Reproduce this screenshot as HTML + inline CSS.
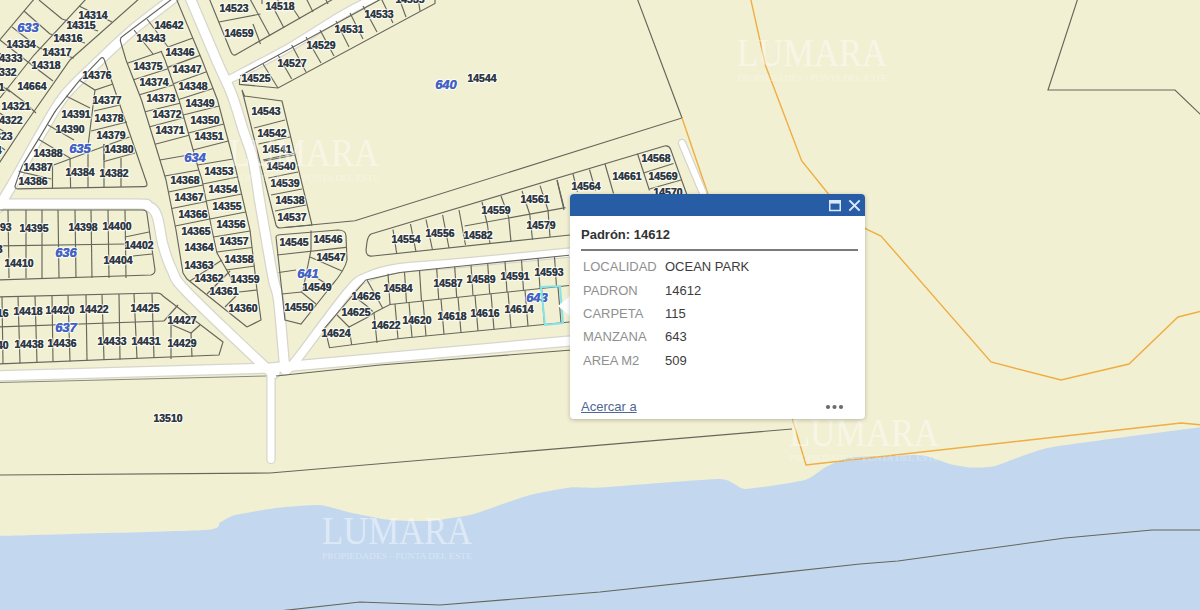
<!DOCTYPE html>
<html><head><meta charset="utf-8">
<style>
html,body{margin:0;padding:0;width:1200px;height:610px;overflow:hidden;background:#f2f0d3;}
svg{position:absolute;left:0;top:0;}
.l{font-family:"Liberation Sans",sans-serif;font-weight:bold;font-size:10.4px;fill:#2e3944;text-anchor:middle;stroke:#ffffff;stroke-width:2.6px;stroke-opacity:0.7;paint-order:stroke;stroke-linejoin:round;}
.lf{font-family:"Liberation Sans",sans-serif;font-weight:bold;font-size:10.4px;fill:#2e3944;text-anchor:middle;stroke:#2e3944;stroke-width:0.12px;}
.b{font-family:"Liberation Sans",sans-serif;font-weight:bold;font-style:italic;font-size:13px;fill:#4262c6;text-anchor:middle;stroke:#ffffff;stroke-width:2.6px;stroke-opacity:0.7;paint-order:stroke;stroke-linejoin:round;}
.bf{font-family:"Liberation Sans",sans-serif;font-weight:bold;font-style:italic;font-size:13px;fill:#4262c6;text-anchor:middle;stroke:#4262c6;stroke-width:0.15px;}
.wm{font-family:"Liberation Serif",serif;font-size:40px;fill:#ffffff;fill-opacity:0.45;}
.wms{font-family:"Liberation Serif",serif;font-size:7.5px;fill:#ffffff;fill-opacity:0.35;}
#pop{position:absolute;left:570px;top:194px;width:295px;height:225px;background:#fff;border-radius:4px;box-shadow:0 1px 4px rgba(0,0,0,0.25);font-family:"Liberation Sans",sans-serif;}
#hdr{position:absolute;left:0;top:0;width:295px;height:22px;background:#275da4;border-radius:4px 4px 0 0;}
#ptr{position:absolute;left:558px;top:296px;width:0;height:0;border-top:10px solid transparent;border-bottom:10px solid transparent;border-right:12px solid #fff;}
#ttl{position:absolute;left:11px;top:33px;font-size:13px;font-weight:bold;color:#323232;white-space:nowrap;}
#sep{position:absolute;left:11px;top:55px;width:277px;height:2px;background:#7a7a7a;}
.row{position:absolute;left:13px;font-size:13px;white-space:nowrap;}
.row .k{position:absolute;left:0;color:#8f8f8f;}
.row .v{position:absolute;left:82px;color:#3c3c3c;}
#lnk{position:absolute;left:11px;top:205px;font-size:13px;color:#4d6894;text-decoration:underline;white-space:nowrap;}

</style></head><body>
<svg width="1200" height="610" viewBox="0 0 1200 610">
<rect width="1200" height="610" fill="#f2f0d3"/>
<path d="M-2.0,536.0 C15.2,535.5 186.5,531.1 205.0,530.0 C223.5,528.9 217.5,523.8 220.0,522.5 C222.5,521.2 230.0,516.2 235.0,515.0 C240.0,513.8 272.9,508.3 280.0,507.5 C287.1,506.7 314.2,504.6 320.0,505.0 C325.8,505.4 344.2,511.2 350.0,512.5 C355.8,513.8 383.3,519.3 390.0,520.0 C396.7,520.7 423.3,521.4 430.0,521.0 C436.7,520.6 464.2,516.3 470.0,515.0 C475.8,513.7 495.0,506.7 500.0,505.0 C505.0,503.3 524.2,496.5 530.0,495.0 C535.8,493.5 564.2,488.1 570.0,487.5 C575.8,486.9 587.5,488.2 600.0,487.5 C612.5,486.8 707.9,478.9 720.0,479.0 C732.1,479.1 737.9,488.9 745.0,489.0 C752.1,489.1 798.3,481.8 805.0,480.0 C811.7,478.2 821.2,469.4 825.0,467.5 C828.8,465.6 842.1,458.5 850.0,457.5 C857.9,456.5 911.7,454.5 920.0,455.0 C928.3,455.5 945.8,463.0 950.0,464.0 C954.2,465.0 966.2,467.3 970.0,467.5 C973.8,467.7 988.3,467.7 995.0,466.0 C1001.7,464.3 1032.8,450.8 1050.0,447.5 C1067.2,444.2 1189.3,428.7 1202.0,427.0 L1202,612 L-2,612 Z" fill="#c3d8ef"/>
<polyline points="270.0,612.0 360.0,602.0 440.0,605.0 600.0,592.0 860.0,564.0 898.0,561.0 1065.0,538.0 1152.0,530.0 1202.0,530.0" fill="none" stroke="#66665c" stroke-width="1.15" />
<polyline points="-2.0,475.0 270.0,473.0 792.0,429.0" fill="none" stroke="#66665c" stroke-width="1.15" />
<polyline points="1078.0,-2.0 1048.0,90.0 1175.0,90.0 1202.0,116.0" fill="none" stroke="#66665c" stroke-width="1.15" />
<polyline points="637.0,-2.0 682.0,118.0 355.0,220.7 284.0,227.5" fill="none" stroke="#66665c" stroke-width="1.15" />
<polyline points="750.5,-2.0 765.5,65.5 801.6,160.7 828.0,193.4 866.0,229.0 881.0,236.0 991.0,362.0 1061.0,380.0 1129.0,364.0 1178.0,317.0 1202.0,311.0" fill="none" stroke="#efad42" stroke-width="1.4" />
<polyline points="682.0,118.0 710.0,200.0" fill="none" stroke="#efad42" stroke-width="1.4" />
<polyline points="792.0,418.0 806.0,465.0 1181.0,423.0 1202.0,425.0" fill="none" stroke="#efad42" stroke-width="1.4" />
<path d="M178.0,-6.0 C176.8,-5.0 178.6,-6.0 171.0,0.0 C163.4,6.0 144.3,20.0 132.5,30.0 C120.7,40.0 111.2,49.2 100.0,60.0 C88.8,70.8 74.5,83.3 65.0,95.0 C55.5,106.7 49.5,119.2 43.0,130.0 C36.5,140.8 31.2,150.8 26.0,160.0 C20.8,169.2 16.7,177.0 12.0,185.0 C7.3,193.0 0.3,204.2 -2.0,208.0" fill="none" stroke="#d6d6cc" stroke-width="11.5" stroke-linecap="round" stroke-linejoin="round"/>
<path d="M189.0,-6.0 C189.3,-5.0 186.4,-11.0 191.0,0.0 C195.6,11.0 209.7,44.2 216.5,60.0 C223.3,75.8 227.6,83.3 232.0,95.0 C236.4,106.7 239.7,119.2 243.2,130.0 C246.7,140.8 250.3,148.3 253.0,160.0 C255.7,171.7 257.4,187.5 259.5,200.0 C261.6,212.5 263.2,221.7 265.5,235.0 C267.8,248.3 271.3,269.2 273.5,280.0 C275.7,290.8 276.8,286.7 278.5,300.0 C280.2,313.3 282.9,348.3 284.0,360.0 C285.1,371.7 284.8,368.3 285.0,370.0" fill="none" stroke="#d6d6cc" stroke-width="11.5" stroke-linecap="round" stroke-linejoin="round"/>
<path d="M230.0,79.0 C240.0,73.7 271.7,57.5 290.0,47.0 C308.3,36.5 326.3,24.0 340.0,16.0 C353.7,8.0 365.3,2.5 372.0,-1.0 C378.7,-4.5 378.7,-4.3 380.0,-5.0" fill="none" stroke="#d6d6cc" stroke-width="9.5" stroke-linecap="round" stroke-linejoin="round"/>
<path d="M-6.0,204.0 C16.7,204.0 104.3,203.7 130.0,204.0 C155.7,204.3 143.5,204.0 148.0,206.0 C152.5,208.0 154.5,209.5 157.0,216.0 C159.5,222.5 160.5,236.0 163.0,245.0 C165.5,254.0 168.0,262.2 172.0,270.0 C176.0,277.8 171.8,276.2 187.0,292.0 C202.2,307.8 248.3,351.5 263.0,365.0 C277.7,378.5 273.0,371.7 275.0,373.0" fill="none" stroke="#d6d6cc" stroke-width="11.5" stroke-linecap="round" stroke-linejoin="round"/>
<path d="M-6.0,376.0 L270.0,368.0 L570.0,341.0" fill="none" stroke="#d6d6cc" stroke-width="11.5" stroke-linecap="round" stroke-linejoin="round"/>
<path d="M287.0,370.0 C288.8,368.0 287.8,371.0 298.0,358.0 C308.2,345.0 336.5,305.5 348.0,292.0 C359.5,278.5 358.3,281.0 367.0,277.0 C375.7,273.0 384.5,270.3 400.0,268.0 C415.5,265.7 430.8,265.7 460.0,263.0 C489.2,260.3 555.8,253.8 575.0,252.0" fill="none" stroke="#d6d6cc" stroke-width="10.5" stroke-linecap="round" stroke-linejoin="round"/>
<path d="M271.0,368.0 L271.0,459.5" fill="none" stroke="#d6d6cc" stroke-width="9.5" stroke-linecap="round" stroke-linejoin="round"/>
<path d="M682.0,143.0 L703.0,193.0" fill="none" stroke="#d6d6cc" stroke-width="8.5" stroke-linecap="round" stroke-linejoin="round"/>
<path d="M178.0,-6.0 C176.8,-5.0 178.6,-6.0 171.0,0.0 C163.4,6.0 144.3,20.0 132.5,30.0 C120.7,40.0 111.2,49.2 100.0,60.0 C88.8,70.8 74.5,83.3 65.0,95.0 C55.5,106.7 49.5,119.2 43.0,130.0 C36.5,140.8 31.2,150.8 26.0,160.0 C20.8,169.2 16.7,177.0 12.0,185.0 C7.3,193.0 0.3,204.2 -2.0,208.0" fill="none" stroke="#ffffff" stroke-width="9" stroke-linecap="round" stroke-linejoin="round"/>
<path d="M189.0,-6.0 C189.3,-5.0 186.4,-11.0 191.0,0.0 C195.6,11.0 209.7,44.2 216.5,60.0 C223.3,75.8 227.6,83.3 232.0,95.0 C236.4,106.7 239.7,119.2 243.2,130.0 C246.7,140.8 250.3,148.3 253.0,160.0 C255.7,171.7 257.4,187.5 259.5,200.0 C261.6,212.5 263.2,221.7 265.5,235.0 C267.8,248.3 271.3,269.2 273.5,280.0 C275.7,290.8 276.8,286.7 278.5,300.0 C280.2,313.3 282.9,348.3 284.0,360.0 C285.1,371.7 284.8,368.3 285.0,370.0" fill="none" stroke="#ffffff" stroke-width="9" stroke-linecap="round" stroke-linejoin="round"/>
<path d="M230.0,79.0 C240.0,73.7 271.7,57.5 290.0,47.0 C308.3,36.5 326.3,24.0 340.0,16.0 C353.7,8.0 365.3,2.5 372.0,-1.0 C378.7,-4.5 378.7,-4.3 380.0,-5.0" fill="none" stroke="#ffffff" stroke-width="7" stroke-linecap="round" stroke-linejoin="round"/>
<path d="M-6.0,204.0 C16.7,204.0 104.3,203.7 130.0,204.0 C155.7,204.3 143.5,204.0 148.0,206.0 C152.5,208.0 154.5,209.5 157.0,216.0 C159.5,222.5 160.5,236.0 163.0,245.0 C165.5,254.0 168.0,262.2 172.0,270.0 C176.0,277.8 171.8,276.2 187.0,292.0 C202.2,307.8 248.3,351.5 263.0,365.0 C277.7,378.5 273.0,371.7 275.0,373.0" fill="none" stroke="#ffffff" stroke-width="9" stroke-linecap="round" stroke-linejoin="round"/>
<path d="M-6.0,376.0 L270.0,368.0 L570.0,341.0" fill="none" stroke="#ffffff" stroke-width="9" stroke-linecap="round" stroke-linejoin="round"/>
<path d="M287.0,370.0 C288.8,368.0 287.8,371.0 298.0,358.0 C308.2,345.0 336.5,305.5 348.0,292.0 C359.5,278.5 358.3,281.0 367.0,277.0 C375.7,273.0 384.5,270.3 400.0,268.0 C415.5,265.7 430.8,265.7 460.0,263.0 C489.2,260.3 555.8,253.8 575.0,252.0" fill="none" stroke="#ffffff" stroke-width="8" stroke-linecap="round" stroke-linejoin="round"/>
<path d="M271.0,368.0 L271.0,459.5" fill="none" stroke="#ffffff" stroke-width="7" stroke-linecap="round" stroke-linejoin="round"/>
<path d="M682.0,143.0 L703.0,193.0" fill="none" stroke="#ffffff" stroke-width="6" stroke-linecap="round" stroke-linejoin="round"/>
<polyline points="276.0,376.0 380.0,365.0 572.0,350.0" fill="none" stroke="#66665c" stroke-width="1.15" />
<polyline points="-2.0,382.5 266.0,376.0" fill="none" stroke="#8a8a80" stroke-width="1.15" />
<polyline points="140.0,-2.0 70.0,60.0 21.0,130.0 -4.0,168.0" fill="none" stroke="#66665c" stroke-width="1.15" />
<polyline points="87.0,-2.0 34.0,55.0 0.0,98.0" fill="none" stroke="#66665c" stroke-width="1.15" />
<polyline points="35.0,-2.0 -2.0,42.0" fill="none" stroke="#66665c" stroke-width="1.15" />
<polyline points="79.0,6.0 112.0,22.0" fill="none" stroke="#66665c" stroke-width="1.15" />
<polyline points="62.0,19.0 98.0,31.0" fill="none" stroke="#66665c" stroke-width="1.15" />
<polyline points="50.0,34.0 85.0,43.0" fill="none" stroke="#66665c" stroke-width="1.15" />
<polyline points="39.0,48.0 74.0,58.0" fill="none" stroke="#66665c" stroke-width="1.15" />
<polyline points="28.0,62.0 53.0,81.0" fill="none" stroke="#66665c" stroke-width="1.15" />
<polyline points="6.0,88.0 23.0,101.0" fill="none" stroke="#66665c" stroke-width="1.15" />
<polyline points="23.0,101.0 36.0,113.0" fill="none" stroke="#66665c" stroke-width="1.15" />
<polyline points="39.0,0.0 62.0,19.0" fill="none" stroke="#66665c" stroke-width="1.15" />
<polyline points="24.0,11.0 50.0,34.0" fill="none" stroke="#66665c" stroke-width="1.15" />
<polyline points="12.0,27.0 39.0,48.0" fill="none" stroke="#66665c" stroke-width="1.15" />
<polyline points="0.0,40.0 28.0,62.0" fill="none" stroke="#66665c" stroke-width="1.15" />
<polyline points="-2.0,52.0 8.0,60.0" fill="none" stroke="#66665c" stroke-width="1.15" />
<polyline points="-2.0,66.0 6.0,72.0" fill="none" stroke="#66665c" stroke-width="1.15" />
<polyline points="-2.0,83.0 10.0,92.0" fill="none" stroke="#66665c" stroke-width="1.15" />
<polyline points="-2.0,112.0 12.0,121.0" fill="none" stroke="#66665c" stroke-width="1.15" />
<polyline points="-2.0,128.0 8.0,134.0" fill="none" stroke="#66665c" stroke-width="1.15" />
<polyline points="-2.0,145.0 5.0,150.0" fill="none" stroke="#66665c" stroke-width="1.15" />
<path d="M100.2,58.9 Q103.0,56.0 104.3,59.8 L146.7,182.7 Q148.0,186.5 144.0,186.6 L18.0,188.9 Q14.0,189.0 15.3,185.2 L20.7,169.8 Q22.0,166.0 24.1,162.6 L35.9,143.4 Q38.0,140.0 40.1,136.6 L53.9,113.4 Q56.0,110.0 58.5,106.9 L76.5,84.1 Q79.0,81.0 81.8,78.1 Z" fill="none" stroke="#66665c" stroke-width="1.15"/>
<polyline points="79.0,80.0 95.0,90.0 113.0,84.0" fill="none" stroke="#66665c" stroke-width="1.15" />
<polyline points="95.0,90.0 88.0,146.0 88.0,187.5" fill="none" stroke="#66665c" stroke-width="1.15" />
<polyline points="94.0,111.0 120.0,105.0" fill="none" stroke="#66665c" stroke-width="1.15" />
<polyline points="91.0,131.0 127.0,122.0" fill="none" stroke="#66665c" stroke-width="1.15" />
<polyline points="104.0,161.5 135.0,153.0" fill="none" stroke="#66665c" stroke-width="1.15" />
<polyline points="66.0,96.0 90.0,108.0" fill="none" stroke="#66665c" stroke-width="1.15" />
<polyline points="48.0,125.0 74.0,140.0" fill="none" stroke="#66665c" stroke-width="1.15" />
<polyline points="38.0,139.0 70.0,158.0 70.6,188.0" fill="none" stroke="#66665c" stroke-width="1.15" />
<polyline points="53.7,165.0 129.5,137.0" fill="none" stroke="#66665c" stroke-width="1.15" />
<polyline points="52.5,165.0 52.5,188.5" fill="none" stroke="#66665c" stroke-width="1.15" />
<polyline points="104.0,144.0 104.0,187.0" fill="none" stroke="#66665c" stroke-width="1.15" />
<polyline points="121.0,158.0 121.0,187.0" fill="none" stroke="#66665c" stroke-width="1.15" />
<polyline points="18.7,171.4 51.3,179.0" fill="none" stroke="#66665c" stroke-width="1.15" />
<polyline points="104.0,160.0 104.0,144.0" fill="none" stroke="#66665c" stroke-width="1.15" />
<polyline points="126.0,60.0 141.5,100.0 163.0,170.0 166.0,180.0 176.0,230.0 183.0,273.0 187.0,279.0 247.0,327.0" fill="none" stroke="#66665c" stroke-width="1.15" />
<polyline points="165.0,60.0 179.0,100.0 198.8,170.0 202.0,180.0 212.0,230.0 217.0,253.0 230.0,276.0 233.0,282.0" fill="none" stroke="#66665c" stroke-width="1.15" />
<polyline points="176.0,-2.0 202.0,60.0 217.5,100.0 236.0,170.0 250.0,230.0 257.0,290.0 261.0,320.0 247.0,327.0" fill="none" stroke="#66665c" stroke-width="1.15" />
<path d="M126,60 L121,43 Q119,38 123,36 L172,-1" fill="none" stroke="#66665c" stroke-width="1.15"/>
<polyline points="147.0,19.0 168.0,47.0" fill="none" stroke="#66665c" stroke-width="1.15" />
<polyline points="134.0,30.0 153.0,54.0" fill="none" stroke="#66665c" stroke-width="1.15" />
<polyline points="168.0,47.0 193.0,38.0" fill="none" stroke="#66665c" stroke-width="1.15" />
<polyline points="161.0,51.0 165.0,60.0" fill="none" stroke="#66665c" stroke-width="1.15" />
<polyline points="127.3,63.3 162.0,51.3" fill="none" stroke="#66665c" stroke-width="1.15" />
<polyline points="133.6,79.7 168.0,68.7" fill="none" stroke="#66665c" stroke-width="1.15" />
<polyline points="139.5,94.8 173.7,84.8" fill="none" stroke="#66665c" stroke-width="1.15" />
<polyline points="145.1,111.7 179.9,103.2" fill="none" stroke="#66665c" stroke-width="1.15" />
<polyline points="149.7,126.8 184.0,117.8" fill="none" stroke="#66665c" stroke-width="1.15" />
<polyline points="155.1,144.3 189.0,135.3" fill="none" stroke="#66665c" stroke-width="1.15" />
<polyline points="159.9,160.0 194.3,154.0" fill="none" stroke="#66665c" stroke-width="1.15" />
<polyline points="164.8,176.0 198.8,170.0" fill="none" stroke="#66665c" stroke-width="1.15" />
<polyline points="168.4,192.0 203.0,185.0" fill="none" stroke="#66665c" stroke-width="1.15" />
<polyline points="171.7,208.5 206.3,201.5" fill="none" stroke="#66665c" stroke-width="1.15" />
<polyline points="175.2,226.0 209.8,219.0" fill="none" stroke="#66665c" stroke-width="1.15" />
<polyline points="167.6,67.4 200.1,55.4" fill="none" stroke="#66665c" stroke-width="1.15" />
<polyline points="173.3,83.8 206.6,71.8" fill="none" stroke="#66665c" stroke-width="1.15" />
<polyline points="178.8,99.5 213.0,88.5" fill="none" stroke="#66665c" stroke-width="1.15" />
<polyline points="183.2,115.0 219.1,106.0" fill="none" stroke="#66665c" stroke-width="1.15" />
<polyline points="188.3,133.0 223.8,124.0" fill="none" stroke="#66665c" stroke-width="1.15" />
<polyline points="193.1,150.0 228.3,141.0" fill="none" stroke="#66665c" stroke-width="1.15" />
<polyline points="197.4,165.0 233.1,159.0" fill="none" stroke="#66665c" stroke-width="1.15" />
<polyline points="202.8,184.0 237.6,177.0" fill="none" stroke="#66665c" stroke-width="1.15" />
<polyline points="206.2,201.0 241.6,194.0" fill="none" stroke="#66665c" stroke-width="1.15" />
<polyline points="209.8,219.0 245.8,212.0" fill="none" stroke="#66665c" stroke-width="1.15" />
<polyline points="213.5,237.0 250.1,231.0" fill="none" stroke="#66665c" stroke-width="1.15" />
<polyline points="216.8,252.0 252.0,247.5" fill="none" stroke="#66665c" stroke-width="1.15" />
<polyline points="190.0,281.0 222.0,260.0" fill="none" stroke="#66665c" stroke-width="1.15" />
<polyline points="207.0,294.0 230.0,271.0" fill="none" stroke="#66665c" stroke-width="1.15" />
<polyline points="226.0,270.0 255.0,266.0" fill="none" stroke="#66665c" stroke-width="1.15" />
<polyline points="239.0,292.0 257.0,290.0" fill="none" stroke="#66665c" stroke-width="1.15" />
<polyline points="236.0,296.0 225.0,307.0" fill="none" stroke="#66665c" stroke-width="1.15" />
<path d="M-4,210 L142,210 Q147,210 147,214 L155,270 Q155,274 151,275 L-4,280" fill="none" stroke="#66665c" stroke-width="1.15"/>
<polyline points="-4.0,246.0 125.0,244.0" fill="none" stroke="#66665c" stroke-width="1.15" />
<polyline points="8.0,210.0 9.0,278.0" fill="none" stroke="#66665c" stroke-width="1.15" />
<polyline points="26.0,210.0 26.0,278.0" fill="none" stroke="#66665c" stroke-width="1.15" />
<polyline points="42.0,210.0 42.0,278.0" fill="none" stroke="#66665c" stroke-width="1.15" />
<polyline points="58.0,210.0 59.0,278.0" fill="none" stroke="#66665c" stroke-width="1.15" />
<polyline points="75.0,210.0 76.0,278.0" fill="none" stroke="#66665c" stroke-width="1.15" />
<polyline points="91.0,210.0 92.0,278.0" fill="none" stroke="#66665c" stroke-width="1.15" />
<polyline points="108.0,210.0 109.0,278.0" fill="none" stroke="#66665c" stroke-width="1.15" />
<polyline points="125.0,210.0 126.0,278.0" fill="none" stroke="#66665c" stroke-width="1.15" />
<polyline points="125.0,237.0 149.0,232.0" fill="none" stroke="#66665c" stroke-width="1.15" />
<polyline points="133.0,256.0 152.0,254.0" fill="none" stroke="#66665c" stroke-width="1.15" />
<polyline points="-4.0,249.0 3.0,252.0" fill="none" stroke="#66665c" stroke-width="1.15" />
<path d="M-4,297 L157,293 Q161,293 163,296 L223,342 L219,355 L-4,364" fill="none" stroke="#66665c" stroke-width="1.15"/>
<polyline points="-4.0,327.0 164.0,321.0" fill="none" stroke="#66665c" stroke-width="1.15" />
<polyline points="2.0,296.9 3.0,364.1" fill="none" stroke="#66665c" stroke-width="1.15" />
<polyline points="18.0,296.6 20.0,363.4" fill="none" stroke="#66665c" stroke-width="1.15" />
<polyline points="35.0,296.1 37.0,362.7" fill="none" stroke="#66665c" stroke-width="1.15" />
<polyline points="52.0,295.7 53.0,362.1" fill="none" stroke="#66665c" stroke-width="1.15" />
<polyline points="68.0,295.3 70.0,361.4" fill="none" stroke="#66665c" stroke-width="1.15" />
<polyline points="86.0,294.9 87.0,360.7" fill="none" stroke="#66665c" stroke-width="1.15" />
<polyline points="102.0,294.4 104.0,360.0" fill="none" stroke="#66665c" stroke-width="1.15" />
<polyline points="119.0,294.0 120.0,359.4" fill="none" stroke="#66665c" stroke-width="1.15" />
<polyline points="134.0,293.6 137.0,358.7" fill="none" stroke="#66665c" stroke-width="1.15" />
<polyline points="152.0,293.2 154.0,358.0" fill="none" stroke="#66665c" stroke-width="1.15" />
<polyline points="164.0,321.0 178.0,305.0" fill="none" stroke="#66665c" stroke-width="1.15" />
<polyline points="170.0,324.0 191.0,333.0 200.0,325.0" fill="none" stroke="#66665c" stroke-width="1.15" />
<polyline points="191.0,333.0 192.0,357.0" fill="none" stroke="#66665c" stroke-width="1.15" />
<polyline points="171.0,323.0 171.0,359.0" fill="none" stroke="#66665c" stroke-width="1.15" />
<path d="M242,90 L244.5,96 L282,101 L312,225 L280,228 Q277,228 276,225 Z" fill="none" stroke="#66665c" stroke-width="1.15"/>
<polyline points="254.0,128.0 285.0,120.0" fill="none" stroke="#66665c" stroke-width="1.15" />
<polyline points="258.5,144.0 290.0,137.0" fill="none" stroke="#66665c" stroke-width="1.15" />
<polyline points="263.0,160.0 295.0,153.0" fill="none" stroke="#66665c" stroke-width="1.15" />
<polyline points="264.0,161.0 295.0,155.0" fill="none" stroke="#66665c" stroke-width="1.15" />
<polyline points="268.0,178.0 298.0,172.0" fill="none" stroke="#66665c" stroke-width="1.15" />
<polyline points="271.0,195.0 302.0,189.0" fill="none" stroke="#66665c" stroke-width="1.15" />
<polyline points="275.0,211.0 306.0,205.0" fill="none" stroke="#66665c" stroke-width="1.15" />
<path d="M276,237 Q276,235 280,234.7 L338,230 Q346,230 346,236 L347,260 Q345,270 332,285 L301,324 L285,320 Z" fill="none" stroke="#66665c" stroke-width="1.15"/>
<polyline points="311.0,230.5 311.0,250.0 309.0,260.0 303.0,290.0 301.5,292.0" fill="none" stroke="#66665c" stroke-width="1.15" />
<polyline points="277.0,255.0 346.0,247.4" fill="none" stroke="#66665c" stroke-width="1.15" />
<polyline points="278.7,272.5 296.0,270.0" fill="none" stroke="#66665c" stroke-width="1.15" />
<polyline points="310.0,257.0 342.0,271.0" fill="none" stroke="#66665c" stroke-width="1.15" />
<polyline points="317.0,278.0 325.0,283.0" fill="none" stroke="#66665c" stroke-width="1.15" />
<polyline points="281.7,294.0 301.5,292.0 316.0,304.0" fill="none" stroke="#66665c" stroke-width="1.15" />
<path d="M209,-2 L231,52 Q233,57 237,54 L335,-2" fill="none" stroke="#66665c" stroke-width="1.15"/>
<polyline points="219.0,22.0 260.5,14.0" fill="none" stroke="#66665c" stroke-width="1.15" />
<polyline points="253.0,24.0 260.5,44.0" fill="none" stroke="#66665c" stroke-width="1.15" />
<polyline points="249.5,-2.0 270.0,36.0" fill="none" stroke="#66665c" stroke-width="1.15" />
<polyline points="273.0,7.0 284.0,28.0" fill="none" stroke="#66665c" stroke-width="1.15" />
<polyline points="292.0,7.0 300.0,19.0" fill="none" stroke="#66665c" stroke-width="1.15" />
<polyline points="306.0,-2.0 313.0,12.0" fill="none" stroke="#66665c" stroke-width="1.15" />
<polyline points="325.0,-2.0 328.0,4.0" fill="none" stroke="#66665c" stroke-width="1.15" />
<polyline points="262.0,-2.0 262.0,4.0" fill="none" stroke="#66665c" stroke-width="1.15" />
<polyline points="277.0,-2.0 280.0,6.0" fill="none" stroke="#66665c" stroke-width="1.15" />
<path d="M240,76 L383,-2 M239.5,79 L239.5,84.4 L278,88 L435,3.5 L435,-2" fill="none" stroke="#66665c" stroke-width="1.15"/>
<polyline points="418.0,-2.0 420.0,11.0" fill="none" stroke="#66665c" stroke-width="1.15" />
<polyline points="263.0,64.0 278.0,88.0" fill="none" stroke="#66665c" stroke-width="1.15" />
<polyline points="278.0,55.0 291.7,79.0" fill="none" stroke="#66665c" stroke-width="1.15" />
<polyline points="291.7,45.0 306.0,72.0" fill="none" stroke="#66665c" stroke-width="1.15" />
<polyline points="306.0,37.0 321.0,63.0" fill="none" stroke="#66665c" stroke-width="1.15" />
<polyline points="320.0,30.0 334.0,56.0" fill="none" stroke="#66665c" stroke-width="1.15" />
<polyline points="336.0,21.0 349.0,47.0" fill="none" stroke="#66665c" stroke-width="1.15" />
<polyline points="350.0,13.0 363.0,39.0" fill="none" stroke="#66665c" stroke-width="1.15" />
<polyline points="363.0,6.0 377.0,32.0" fill="none" stroke="#66665c" stroke-width="1.15" />
<polyline points="381.0,-2.0 393.0,23.0" fill="none" stroke="#66665c" stroke-width="1.15" />
<polyline points="399.0,-2.0 406.0,17.0" fill="none" stroke="#66665c" stroke-width="1.15" />
<path d="M371,234 L664.5,146 Q669,145 670.5,149 L687,195 M570,235 L373,256 Q366,257 366,250 L367,242 Q368,236 371,234" fill="none" stroke="#66665c" stroke-width="1.15"/>
<polyline points="464.6,226.0 565.5,207.6" fill="none" stroke="#66665c" stroke-width="1.15" />
<polyline points="393.0,229.6 396.7,253.5" fill="none" stroke="#66665c" stroke-width="1.15" />
<polyline points="410.5,224.0 416.0,251.6" fill="none" stroke="#66665c" stroke-width="1.15" />
<polyline points="426.0,219.5 432.5,249.8" fill="none" stroke="#66665c" stroke-width="1.15" />
<polyline points="442.6,215.0 449.0,248.0" fill="none" stroke="#66665c" stroke-width="1.15" />
<polyline points="459.0,210.0 465.5,245.0" fill="none" stroke="#66665c" stroke-width="1.15" />
<polyline points="482.0,202.0 487.5,225.0" fill="none" stroke="#66665c" stroke-width="1.15" />
<polyline points="501.0,196.0 508.6,216.8" fill="none" stroke="#66665c" stroke-width="1.15" />
<polyline points="522.0,191.0 529.7,214.0" fill="none" stroke="#66665c" stroke-width="1.15" />
<polyline points="540.0,185.6 548.0,210.0" fill="none" stroke="#66665c" stroke-width="1.15" />
<polyline points="557.0,180.0 564.0,207.6" fill="none" stroke="#66665c" stroke-width="1.15" />
<polyline points="487.5,225.0 490.0,244.0" fill="none" stroke="#66665c" stroke-width="1.15" />
<polyline points="508.6,216.8 511.0,241.6" fill="none" stroke="#66665c" stroke-width="1.15" />
<polyline points="529.7,214.0 532.5,239.7" fill="none" stroke="#66665c" stroke-width="1.15" />
<polyline points="548.0,210.0 550.0,237.0" fill="none" stroke="#66665c" stroke-width="1.15" />
<polyline points="557.0,180.0 564.0,210.0" fill="none" stroke="#66665c" stroke-width="1.15" />
<polyline points="573.0,174.0 577.5,192.0" fill="none" stroke="#66665c" stroke-width="1.15" />
<polyline points="589.5,169.5 595.5,190.5" fill="none" stroke="#66665c" stroke-width="1.15" />
<polyline points="605.0,164.0 613.5,193.5" fill="none" stroke="#66665c" stroke-width="1.15" />
<polyline points="637.5,153.7 649.5,190.5" fill="none" stroke="#66665c" stroke-width="1.15" />
<polyline points="643.5,173.0 673.5,163.5" fill="none" stroke="#66665c" stroke-width="1.15" />
<polyline points="649.5,189.0 681.0,180.0" fill="none" stroke="#66665c" stroke-width="1.15" />
<path d="M365.7,280 L400,272.5 L460,266.2 L569,255.2 M365.7,280 L324.8,327.8 L329.5,347.7 L400,338.5 L569.5,322" fill="none" stroke="#66665c" stroke-width="1.15"/>
<polyline points="374.0,312.7 390.0,304.5 569.0,285.5" fill="none" stroke="#66665c" stroke-width="1.15" />
<polyline points="358.7,299.8 366.8,306.0 372.7,311.5" fill="none" stroke="#66665c" stroke-width="1.15" />
<polyline points="337.0,315.0 349.0,327.0 368.0,317.0 374.0,312.7" fill="none" stroke="#66665c" stroke-width="1.15" />
<polyline points="367.0,280.0 382.6,308.0" fill="none" stroke="#66665c" stroke-width="1.15" />
<polyline points="374.0,312.7 377.0,343.0" fill="none" stroke="#66665c" stroke-width="1.15" />
<polyline points="349.0,327.0 351.7,345.0" fill="none" stroke="#66665c" stroke-width="1.15" />
<polyline points="388.0,273.8 390.0,304.5" fill="none" stroke="#66665c" stroke-width="1.15" />
<polyline points="404.5,272.0 406.5,302.7" fill="none" stroke="#66665c" stroke-width="1.15" />
<polyline points="419.5,270.5 421.5,301.2" fill="none" stroke="#66665c" stroke-width="1.15" />
<polyline points="436.7,268.6 438.7,299.3" fill="none" stroke="#66665c" stroke-width="1.15" />
<polyline points="454.7,266.8 456.7,297.4" fill="none" stroke="#66665c" stroke-width="1.15" />
<polyline points="471.0,265.1 473.0,295.7" fill="none" stroke="#66665c" stroke-width="1.15" />
<polyline points="487.7,263.4 489.7,293.9" fill="none" stroke="#66665c" stroke-width="1.15" />
<polyline points="505.0,261.7 507.0,292.1" fill="none" stroke="#66665c" stroke-width="1.15" />
<polyline points="521.5,260.1 523.5,290.3" fill="none" stroke="#66665c" stroke-width="1.15" />
<polyline points="538.0,258.4 540.0,288.6" fill="none" stroke="#66665c" stroke-width="1.15" />
<polyline points="554.5,256.8 556.5,286.8" fill="none" stroke="#66665c" stroke-width="1.15" />
<polyline points="395.0,304.0 398.0,338.7" fill="none" stroke="#66665c" stroke-width="1.15" />
<polyline points="409.0,302.5 412.0,337.3" fill="none" stroke="#66665c" stroke-width="1.15" />
<polyline points="423.0,301.0 426.0,336.0" fill="none" stroke="#66665c" stroke-width="1.15" />
<polyline points="441.0,299.1 444.0,334.2" fill="none" stroke="#66665c" stroke-width="1.15" />
<polyline points="458.0,297.3 461.0,332.6" fill="none" stroke="#66665c" stroke-width="1.15" />
<polyline points="475.0,295.5 478.0,330.9" fill="none" stroke="#66665c" stroke-width="1.15" />
<polyline points="491.0,293.8 494.0,329.4" fill="none" stroke="#66665c" stroke-width="1.15" />
<polyline points="508.0,292.0 511.0,327.7" fill="none" stroke="#66665c" stroke-width="1.15" />
<polyline points="525.0,290.2 528.0,326.1" fill="none" stroke="#66665c" stroke-width="1.15" />
<polyline points="541.5,288.4 544.5,324.5" fill="none" stroke="#66665c" stroke-width="1.15" />
<polyline points="558.0,286.7 561.0,322.9" fill="none" stroke="#66665c" stroke-width="1.15" />
<text x="93" y="18.7" class="l">14314</text>
<text x="93" y="18.7" class="lf">14314</text>
<text x="81" y="28.7" class="l">14315</text>
<text x="81" y="28.7" class="lf">14315</text>
<text x="68" y="41.7" class="l">14316</text>
<text x="68" y="41.7" class="lf">14316</text>
<text x="21" y="47.7" class="l">14334</text>
<text x="21" y="47.7" class="lf">14334</text>
<text x="57" y="55.7" class="l">14317</text>
<text x="57" y="55.7" class="lf">14317</text>
<text x="8" y="61.7" class="l">14333</text>
<text x="8" y="61.7" class="lf">14333</text>
<text x="46" y="68.7" class="l">14318</text>
<text x="46" y="68.7" class="lf">14318</text>
<text x="2" y="75.7" class="l">14332</text>
<text x="2" y="75.7" class="lf">14332</text>
<text x="32" y="89.7" class="l">14664</text>
<text x="32" y="89.7" class="lf">14664</text>
<text x="-10" y="90.7" class="l">14331</text>
<text x="-10" y="90.7" class="lf">14331</text>
<text x="16" y="109.7" class="l">14321</text>
<text x="16" y="109.7" class="lf">14321</text>
<text x="8" y="123.7" class="l">14322</text>
<text x="8" y="123.7" class="lf">14322</text>
<text x="-2" y="139.7" class="l">14323</text>
<text x="-2" y="139.7" class="lf">14323</text>
<text x="-13" y="153.7" class="l">14324</text>
<text x="-13" y="153.7" class="lf">14324</text>
<text x="97" y="78.7" class="l">14376</text>
<text x="97" y="78.7" class="lf">14376</text>
<text x="107" y="103.7" class="l">14377</text>
<text x="107" y="103.7" class="lf">14377</text>
<text x="76" y="117.7" class="l">14391</text>
<text x="76" y="117.7" class="lf">14391</text>
<text x="109" y="121.7" class="l">14378</text>
<text x="109" y="121.7" class="lf">14378</text>
<text x="70" y="132.7" class="l">14390</text>
<text x="70" y="132.7" class="lf">14390</text>
<text x="111" y="138.7" class="l">14379</text>
<text x="111" y="138.7" class="lf">14379</text>
<text x="119" y="152.7" class="l">14380</text>
<text x="119" y="152.7" class="lf">14380</text>
<text x="48" y="156.7" class="l">14388</text>
<text x="48" y="156.7" class="lf">14388</text>
<text x="38" y="170.7" class="l">14387</text>
<text x="38" y="170.7" class="lf">14387</text>
<text x="80" y="175.7" class="l">14384</text>
<text x="80" y="175.7" class="lf">14384</text>
<text x="114" y="176.7" class="l">14382</text>
<text x="114" y="176.7" class="lf">14382</text>
<text x="33" y="184.7" class="l">14386</text>
<text x="33" y="184.7" class="lf">14386</text>
<text x="169" y="28.7" class="l">14642</text>
<text x="169" y="28.7" class="lf">14642</text>
<text x="151" y="41.7" class="l">14343</text>
<text x="151" y="41.7" class="lf">14343</text>
<text x="180" y="55.7" class="l">14346</text>
<text x="180" y="55.7" class="lf">14346</text>
<text x="148" y="69.7" class="l">14375</text>
<text x="148" y="69.7" class="lf">14375</text>
<text x="187" y="72.7" class="l">14347</text>
<text x="187" y="72.7" class="lf">14347</text>
<text x="154" y="85.7" class="l">14374</text>
<text x="154" y="85.7" class="lf">14374</text>
<text x="193" y="89.7" class="l">14348</text>
<text x="193" y="89.7" class="lf">14348</text>
<text x="161" y="101.7" class="l">14373</text>
<text x="161" y="101.7" class="lf">14373</text>
<text x="200" y="106.7" class="l">14349</text>
<text x="200" y="106.7" class="lf">14349</text>
<text x="167" y="117.7" class="l">14372</text>
<text x="167" y="117.7" class="lf">14372</text>
<text x="205" y="123.7" class="l">14350</text>
<text x="205" y="123.7" class="lf">14350</text>
<text x="170" y="133.7" class="l">14371</text>
<text x="170" y="133.7" class="lf">14371</text>
<text x="209" y="139.7" class="l">14351</text>
<text x="209" y="139.7" class="lf">14351</text>
<text x="219" y="174.7" class="l">14353</text>
<text x="219" y="174.7" class="lf">14353</text>
<text x="185" y="183.7" class="l">14368</text>
<text x="185" y="183.7" class="lf">14368</text>
<text x="223" y="192.7" class="l">14354</text>
<text x="223" y="192.7" class="lf">14354</text>
<text x="189" y="200.7" class="l">14367</text>
<text x="189" y="200.7" class="lf">14367</text>
<text x="227" y="209.7" class="l">14355</text>
<text x="227" y="209.7" class="lf">14355</text>
<text x="193" y="217.7" class="l">14366</text>
<text x="193" y="217.7" class="lf">14366</text>
<text x="231" y="227.7" class="l">14356</text>
<text x="231" y="227.7" class="lf">14356</text>
<text x="196" y="234.7" class="l">14365</text>
<text x="196" y="234.7" class="lf">14365</text>
<text x="234" y="244.7" class="l">14357</text>
<text x="234" y="244.7" class="lf">14357</text>
<text x="199" y="250.7" class="l">14364</text>
<text x="199" y="250.7" class="lf">14364</text>
<text x="239" y="262.7" class="l">14358</text>
<text x="239" y="262.7" class="lf">14358</text>
<text x="199" y="268.7" class="l">14363</text>
<text x="199" y="268.7" class="lf">14363</text>
<text x="209" y="281.7" class="l">14362</text>
<text x="209" y="281.7" class="lf">14362</text>
<text x="245" y="282.7" class="l">14359</text>
<text x="245" y="282.7" class="lf">14359</text>
<text x="224" y="294.7" class="l">14361</text>
<text x="224" y="294.7" class="lf">14361</text>
<text x="243" y="311.7" class="l">14360</text>
<text x="243" y="311.7" class="lf">14360</text>
<text x="234" y="11.7" class="l">14523</text>
<text x="234" y="11.7" class="lf">14523</text>
<text x="280" y="9.7" class="l">14518</text>
<text x="280" y="9.7" class="lf">14518</text>
<text x="239" y="36.7" class="l">14659</text>
<text x="239" y="36.7" class="lf">14659</text>
<text x="256" y="81.7" class="l">14525</text>
<text x="256" y="81.7" class="lf">14525</text>
<text x="292" y="66.7" class="l">14527</text>
<text x="292" y="66.7" class="lf">14527</text>
<text x="321" y="48.7" class="l">14529</text>
<text x="321" y="48.7" class="lf">14529</text>
<text x="349" y="32.7" class="l">14531</text>
<text x="349" y="32.7" class="lf">14531</text>
<text x="379" y="17.7" class="l">14533</text>
<text x="379" y="17.7" class="lf">14533</text>
<text x="410" y="2.7" class="l">14535</text>
<text x="410" y="2.7" class="lf">14535</text>
<text x="266" y="114.7" class="l">14543</text>
<text x="266" y="114.7" class="lf">14543</text>
<text x="272" y="136.7" class="l">14542</text>
<text x="272" y="136.7" class="lf">14542</text>
<text x="277" y="152.7" class="l">14541</text>
<text x="277" y="152.7" class="lf">14541</text>
<text x="281" y="169.7" class="l">14540</text>
<text x="281" y="169.7" class="lf">14540</text>
<text x="285" y="186.7" class="l">14539</text>
<text x="285" y="186.7" class="lf">14539</text>
<text x="290" y="203.7" class="l">14538</text>
<text x="290" y="203.7" class="lf">14538</text>
<text x="292" y="220.7" class="l">14537</text>
<text x="292" y="220.7" class="lf">14537</text>
<text x="482" y="81.7" class="l">14544</text>
<text x="482" y="81.7" class="lf">14544</text>
<text x="34" y="231.7" class="l">14395</text>
<text x="34" y="231.7" class="lf">14395</text>
<text x="-3" y="230.7" class="l">14393</text>
<text x="-3" y="230.7" class="lf">14393</text>
<text x="83" y="230.7" class="l">14398</text>
<text x="83" y="230.7" class="lf">14398</text>
<text x="117" y="229.7" class="l">14400</text>
<text x="117" y="229.7" class="lf">14400</text>
<text x="139" y="248.7" class="l">14402</text>
<text x="139" y="248.7" class="lf">14402</text>
<text x="-12" y="252.7" class="l">14403</text>
<text x="-12" y="252.7" class="lf">14403</text>
<text x="19" y="266.7" class="l">14410</text>
<text x="19" y="266.7" class="lf">14410</text>
<text x="118" y="263.7" class="l">14404</text>
<text x="118" y="263.7" class="lf">14404</text>
<text x="28" y="314.7" class="l">14418</text>
<text x="28" y="314.7" class="lf">14418</text>
<text x="-6" y="316.7" class="l">14416</text>
<text x="-6" y="316.7" class="lf">14416</text>
<text x="60" y="313.7" class="l">14420</text>
<text x="60" y="313.7" class="lf">14420</text>
<text x="94" y="312.7" class="l">14422</text>
<text x="94" y="312.7" class="lf">14422</text>
<text x="145" y="311.7" class="l">14425</text>
<text x="145" y="311.7" class="lf">14425</text>
<text x="182" y="323.7" class="l">14427</text>
<text x="182" y="323.7" class="lf">14427</text>
<text x="-6" y="348.7" class="l">14440</text>
<text x="-6" y="348.7" class="lf">14440</text>
<text x="29" y="347.7" class="l">14438</text>
<text x="29" y="347.7" class="lf">14438</text>
<text x="62" y="346.7" class="l">14436</text>
<text x="62" y="346.7" class="lf">14436</text>
<text x="112" y="344.7" class="l">14433</text>
<text x="112" y="344.7" class="lf">14433</text>
<text x="146" y="344.7" class="l">14431</text>
<text x="146" y="344.7" class="lf">14431</text>
<text x="182" y="346.7" class="l">14429</text>
<text x="182" y="346.7" class="lf">14429</text>
<text x="294" y="245.7" class="l">14545</text>
<text x="294" y="245.7" class="lf">14545</text>
<text x="328" y="242.7" class="l">14546</text>
<text x="328" y="242.7" class="lf">14546</text>
<text x="331" y="260.7" class="l">14547</text>
<text x="331" y="260.7" class="lf">14547</text>
<text x="317" y="290.7" class="l">14549</text>
<text x="317" y="290.7" class="lf">14549</text>
<text x="299" y="310.7" class="l">14550</text>
<text x="299" y="310.7" class="lf">14550</text>
<text x="406" y="242.7" class="l">14554</text>
<text x="406" y="242.7" class="lf">14554</text>
<text x="440" y="236.7" class="l">14556</text>
<text x="440" y="236.7" class="lf">14556</text>
<text x="478" y="238.7" class="l">14582</text>
<text x="478" y="238.7" class="lf">14582</text>
<text x="496" y="213.7" class="l">14559</text>
<text x="496" y="213.7" class="lf">14559</text>
<text x="535" y="202.7" class="l">14561</text>
<text x="535" y="202.7" class="lf">14561</text>
<text x="541" y="228.7" class="l">14579</text>
<text x="541" y="228.7" class="lf">14579</text>
<text x="586" y="189.7" class="l">14564</text>
<text x="586" y="189.7" class="lf">14564</text>
<text x="656" y="161.7" class="l">14568</text>
<text x="656" y="161.7" class="lf">14568</text>
<text x="627" y="179.7" class="l">14661</text>
<text x="627" y="179.7" class="lf">14661</text>
<text x="663" y="179.7" class="l">14569</text>
<text x="663" y="179.7" class="lf">14569</text>
<text x="668" y="195.7" class="l">14570</text>
<text x="668" y="195.7" class="lf">14570</text>
<text x="398" y="291.7" class="l">14584</text>
<text x="398" y="291.7" class="lf">14584</text>
<text x="448" y="286.7" class="l">14587</text>
<text x="448" y="286.7" class="lf">14587</text>
<text x="481" y="282.7" class="l">14589</text>
<text x="481" y="282.7" class="lf">14589</text>
<text x="515" y="279.7" class="l">14591</text>
<text x="515" y="279.7" class="lf">14591</text>
<text x="549" y="275.7" class="l">14593</text>
<text x="549" y="275.7" class="lf">14593</text>
<text x="366" y="299.7" class="l">14626</text>
<text x="366" y="299.7" class="lf">14626</text>
<text x="356" y="315.7" class="l">14625</text>
<text x="356" y="315.7" class="lf">14625</text>
<text x="336" y="336.7" class="l">14624</text>
<text x="336" y="336.7" class="lf">14624</text>
<text x="386" y="328.7" class="l">14622</text>
<text x="386" y="328.7" class="lf">14622</text>
<text x="417" y="323.7" class="l">14620</text>
<text x="417" y="323.7" class="lf">14620</text>
<text x="452" y="319.7" class="l">14618</text>
<text x="452" y="319.7" class="lf">14618</text>
<text x="485" y="316.7" class="l">14616</text>
<text x="485" y="316.7" class="lf">14616</text>
<text x="519" y="312.7" class="l">14614</text>
<text x="519" y="312.7" class="lf">14614</text>
<text x="168" y="421.7" class="l">13510</text>
<text x="168" y="421.7" class="lf">13510</text>
<text x="28" y="31.6" class="b">633</text>
<text x="28" y="31.6" class="bf">633</text>
<text x="80" y="152.6" class="b">635</text>
<text x="80" y="152.6" class="bf">635</text>
<text x="195" y="161.6" class="b">634</text>
<text x="195" y="161.6" class="bf">634</text>
<text x="66" y="256.6" class="b">636</text>
<text x="66" y="256.6" class="bf">636</text>
<text x="66" y="332.1" class="b">637</text>
<text x="66" y="332.1" class="bf">637</text>
<text x="308" y="277.6" class="b">641</text>
<text x="308" y="277.6" class="bf">641</text>
<text x="537" y="301.6" class="b">643</text>
<text x="537" y="301.6" class="bf">643</text>
<text x="446" y="88.6" class="b">640</text>
<text x="446" y="88.6" class="bf">640</text>
<polygon points="541,287 560,286 563,323 545,325" fill="none" stroke="#86e3e6" stroke-width="2"/>
<text x="737" y="66" class="wm" textLength="150" lengthAdjust="spacingAndGlyphs">LUMARA</text>
<text x="737" y="81" class="wms" textLength="150" lengthAdjust="spacingAndGlyphs">PROPIEDADES - PUNTA DEL ESTE</text>
<text x="229" y="166" class="wm" textLength="150" lengthAdjust="spacingAndGlyphs">LUMARA</text>
<text x="229" y="181" class="wms" textLength="150" lengthAdjust="spacingAndGlyphs">PROPIEDADES - PUNTA DEL ESTE</text>
<text x="789" y="446" class="wm" textLength="150" lengthAdjust="spacingAndGlyphs">LUMARA</text>
<text x="789" y="461" class="wms" textLength="150" lengthAdjust="spacingAndGlyphs">PROPIEDADES - PUNTA DEL ESTE</text>
<text x="322" y="544" class="wm" textLength="150" lengthAdjust="spacingAndGlyphs">LUMARA</text>
<text x="322" y="559" class="wms" textLength="150" lengthAdjust="spacingAndGlyphs">PROPIEDADES - PUNTA DEL ESTE</text>
</svg>
<div id="ptr"></div>
<div id="pop">
<div id="hdr">
<svg width="295" height="22" style="position:absolute;left:0;top:0">
<path d="M259.75,6.75 h10.5 v9.75 h-10.5 Z" fill="none" stroke="#dbe7ff" stroke-width="1.5"/>
<rect x="259" y="6" width="12" height="3.6" fill="#dbe7ff"/>
<path d="M280,7 L289,16 M289,7 L280,16" stroke="#dbe7ff" stroke-width="1.9" stroke-linecap="square"/>
</svg>
</div>
<div id="ttl">Padrón: 14612</div>
<div id="sep"></div>
<div class="row" style="top:65px"><span class="k">LOCALIDAD</span><span class="v">OCEAN PARK</span></div>
<div class="row" style="top:89px"><span class="k">PADRON</span><span class="v">14612</span></div>
<div class="row" style="top:112px"><span class="k">CARPETA</span><span class="v">115</span></div>
<div class="row" style="top:135px"><span class="k">MANZANA</span><span class="v">643</span></div>
<div class="row" style="top:159px"><span class="k">AREA M2</span><span class="v">509</span></div>
<div id="lnk">Acercar a</div>
<svg id="dots" width="20" height="6" style="position:absolute;left:254.5px;top:209.5px"><circle cx="3" cy="3" r="2.1" fill="#6b6b6b"/><circle cx="9.5" cy="3" r="2.1" fill="#6b6b6b"/><circle cx="16" cy="3" r="2.1" fill="#6b6b6b"/></svg>
</div>
</body></html>
